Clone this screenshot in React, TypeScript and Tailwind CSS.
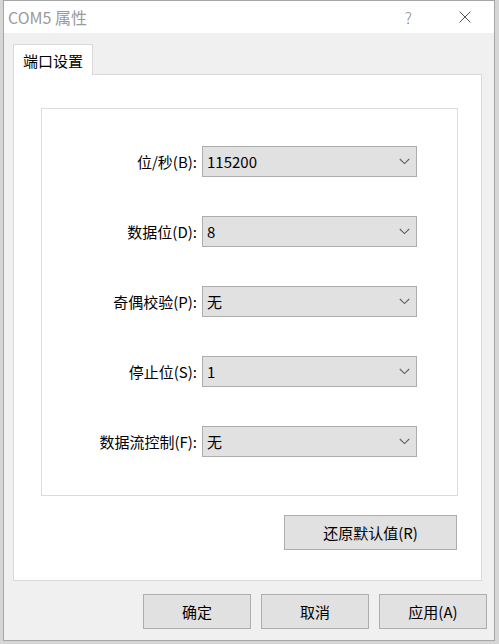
const rows = [
  { label: "位/秒(B):", value: "115200" },
  { label: "数据位(D):", value: "8" },
  { label: "奇偶校验(P):", value: "无" },
  { label: "停止位(S):", value: "1" },
  { label: "数据流控制(F):", value: "无" },
];

function Chevron() {
  return (
    <svg width="11" height="7" viewBox="0 0 11 7">
      <path d="M0.8 1 L5.5 5.6 L10.2 1" fill="none" stroke="#606060" strokeWidth="1.1" />
    </svg>
  );
}

function Combo({ value }: { value: string }) {
  return (
    <div className="ml-[5px] flex h-[31px] w-[215px] items-center justify-between border border-[#adadad] bg-[#e1e1e1] pl-[4px] pr-[6px]">
      <span className="text-[15px] leading-none text-black">{value}</span>
      <Chevron />
    </div>
  );
}

function Button({ children, className = "" }: { children: React.ReactNode; className?: string }) {
  return (
    <button
      type="button"
      className={`flex h-[35px] w-[108px] items-center justify-center border border-[#adadad] bg-[#e1e1e1] text-[15px] leading-none text-black ${className}`}
    >
      {children}
    </button>
  );
}

export default function App() {
  return (
    <div className="h-[644px] w-[499px] overflow-hidden bg-[#d6d6d6] pl-[3px] font-['Noto_Sans_CJK_SC',sans-serif]">
      <div className="flex h-[641px] w-[492px] flex-col border border-[#a6a6a6] bg-[#f0f0f0]">
        {/* title bar */}
        <div className="flex h-[32px] items-center justify-between bg-white pl-[4px]">
          <span className="text-[16px] leading-none text-[#9a9a9a]">COM5 属性</span>
          <div className="flex items-center">
            <span className="text-[16px] font-light leading-none text-[#8a8a8a]">?</span>
            <svg className="ml-[47px] mr-[23px]" width="12" height="12" viewBox="0 0 12 12">
              <path d="M0.5 0.5 L11.5 11.5 M11.5 0.5 L0.5 11.5" stroke="#555" strokeWidth="1" />
            </svg>
          </div>
        </div>

        {/* tab */}
        <div className="ml-[9px] mt-[11px]">
          <div className="relative z-10 -mb-px flex h-[31px] w-[80px] items-center border border-b-0 border-[#d9d9d9] bg-white pl-[9px] pt-[1px]">
            <span className="text-[15px] leading-none text-black">端口设置</span>
          </div>

          {/* tab page */}
          <div className="h-[507px] w-[469px] border border-[#d9d9d9] bg-white pl-[27px] pt-[33px]">
            <div className="flex h-[388px] w-[417px] flex-col gap-[39px] border border-[#dcdcdc] pt-[37px]">
              {rows.map((r) => (
                <div key={r.label} className="flex h-[31px] items-center">
                  <span className="w-[155px] text-right text-[15px] leading-none text-black">{r.label}</span>
                  <Combo value={r.value} />
                </div>
              ))}
            </div>
            <Button className="ml-[243px] mt-[19px] w-[173px]">还原默认值(R)</Button>
          </div>
        </div>

        {/* dialog buttons */}
        <div className="mt-[13px] flex justify-end gap-[10px] pr-[7px]">
          <Button>确定</Button>
          <Button>取消</Button>
          <Button>应用(A)</Button>
        </div>
      </div>
    </div>
  );
}
